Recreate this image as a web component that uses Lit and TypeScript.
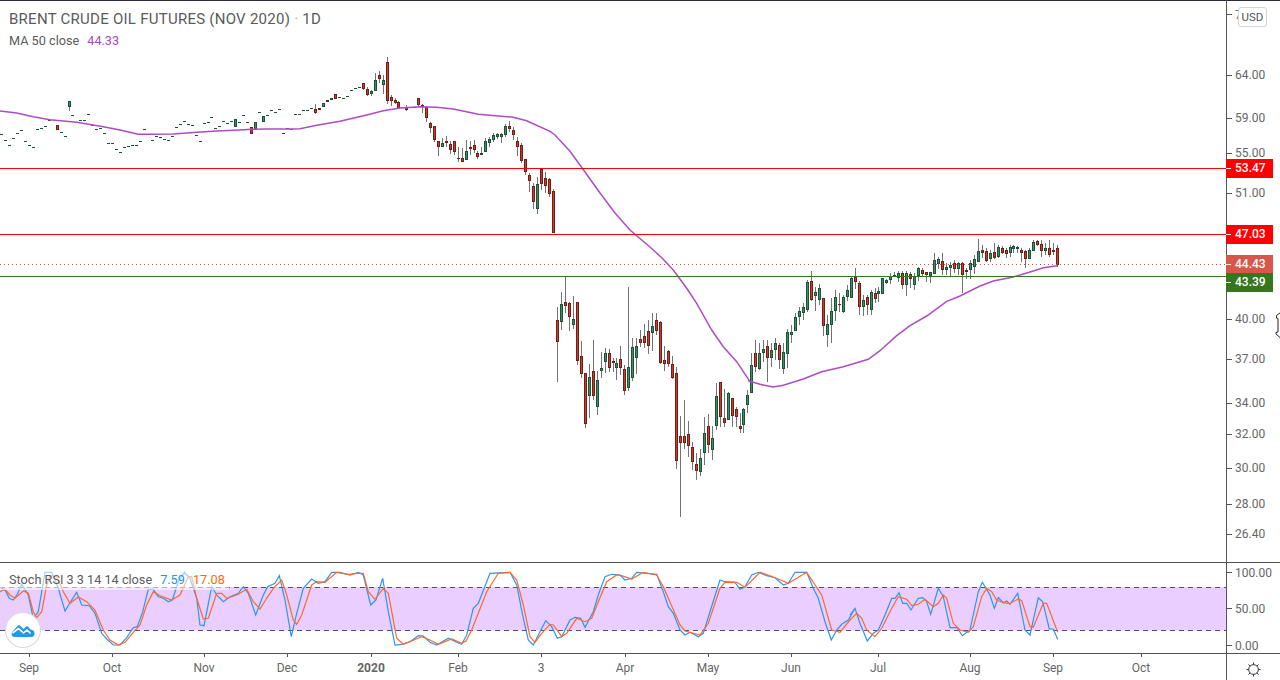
import { LitElement, html, css, svg } from "lit";
import { customElement } from "lit/decorators.js";

type Row = [number, number, number, number, number, string];
const fromZoom = (ox: number, oy: number, rows: Row[]) =>
  rows.map(([x, wt, wb, bt, bb, c]) => ({
    x: ox + x / 3, wt: oy + wt / 3, wb: oy + wb / 3, bt: oy + bt / 3, bb: oy + bb / 3, c,
  }));

const z1: Row[] = [
  [172,376,389,376,389,"R"],[208,303,332,303,320,"G"],[706,358,382,358,382,"G"],[754,382,401,382,401,"R"],[766,367,386,367,386,"G"],
  [790,349,365,349,365,"G"],[946,312,342,328,339,"R"],[958,324,329,324,329,"R"],[970,310,322,310,322,"G"],[982,301,305,301,305,"R"],
  [994,295,301,295,301,"G"],[1006,283,296,283,296,"R"],[1088,250,270,250,266,"R"],[1100,262,288,267,284,"R"],[1112,270,287,274,282,"G"],
  [1124,218,272,241,272,"G"],[1136,214,250,226,236,"R"],[1148,225,283,241,254,"G"],[1160,172,312,187,302,"R"],[1172,285,318,292,302,"R"],
  [1184,295,312,301,308,"R"],[1195,303,328,307,323,"R"],[1219,315,332,320,329,"R"],[1255,295,318,295,314,"R"],[1267,312,340,316,320,"R"],
];
const dashes: [number, number][] = [
  [4,403],[16,421],[28,436],[40,415],[52,400],[64,391],[76,424],[88,436],[100,442],[112,388],[124,385],[136,379],[148,360],[184,397],[196,409],
  [217,345],[229,367],[241,361],[253,361],[265,343],[277,374],[289,386],[301,385],[313,400],[325,430],[337,430],[349,448],[361,457],[373,441],
  [385,438],[397,436],[409,436],[421,423],[433,387],[445,403],[457,421],[469,409],[481,412],[493,418],[505,421],[517,409],[529,382],[541,373],
  [553,364],[565,373],[577,376],[589,406],[601,424],[613,370],[623,367],[634,352],[646,385],[658,379],[670,364],[682,370],[694,364],[718,366],
  [730,346],[742,367],[778,337],[802,344],[814,331],[826,337],[838,328],[850,400],[862,385],[874,386],[886,343],[898,343],[910,331],[922,329],
  [934,323],[1018,292],[1028,295],[1040,289],[1052,271],[1064,265],[1076,262],[1207,320],[1231,320],[1243,320],
];
const z8: Row[] = [
  [19,48,95,52,83,"R"],[31,97,128,100,113,"R"],[43,107,155,109,149,"R"],[55,153,197,153,170,"R"],[67,143,172,160,170,"G"],[79,138,172,153,158,"R"],
  [91,152,192,162,179,"R"],[103,152,195,154,185,"R"],[115,172,215,204,207,"R"],[127,175,217,205,215,"R"],[139,150,210,184,209,"G"],[151,153,195,171,176,"R"],
  [163,150,190,166,179,"R"],[172,183,207,190,200,"R"],[184,172,195,190,194,"G"],[196,145,187,154,185,"G"],[208,140,172,148,158,"G"],[220,130,157,136,149,"G"],
  [232,130,147,133,140,"G"],[244,130,158,133,140,"G"],[256,102,140,108,134,"G"],[268,93,125,109,116,"R"],[280,110,150,121,134,"R"],[292,140,197,154,170,"R"],
  [304,160,220,166,212,"R"],[316,207,255,208,245,"R"],[328,248,305,256,272,"R"],[340,280,357,289,335,"R"],[352,262,372,283,356,"G"],[364,235,300,237,281,"R"],
  [376,247,310,265,287,"R"],[388,265,320,268,311,"R"],[400,298,430,304,428,"R"],
];
const z6: Row[] = [
  [82,110,335,150,215,"R"],[94,66,180,102,155,"G"],[106,20,128,96,107,"R"],[118,96,182,99,140,"R"],[130,78,177,148,164,"G"],[142,96,285,96,272,"R"],
  [154,213,323,258,311,"R"],[166,310,473,310,461,"R"],[178,282,444,321,377,"G"],[190,210,390,303,377,"R"],[202,303,435,330,410,"G"],[214,247,323,294,302,"G"],
  [226,235,308,249,275,"G"],[238,237,305,249,293,"R"],[248,265,305,274,278,"R"],[259,265,330,279,293,"G"],[271,228,316,267,293,"R"],[283,286,375,297,362,"R"],
  [295,52,362,291,354,"G"],[307,205,332,231,323,"G"],[319,205,312,228,263,"G"],[331,180,230,207,219,"R"],[343,163,235,198,219,"R"],[355,150,252,183,227,"R"],
  [367,130,243,168,188,"G"],[379,130,195,150,182,"R"],[391,153,282,156,278,"R"],[403,228,303,270,281,"R"],[415,240,290,243,281,"R"],[427,258,328,282,323,"R"],
  [439,290,597,309,572,"R"],[451,438,740,498,519,"R"],[463,390,538,498,519,"R"],[475,453,560,492,527,"R"],[487,517,600,531,575,"R"],[499,548,630,582,602,"R"],
  [511,537,618,564,605,"G"],[523,442,585,489,548,"G"],[535,432,550,468,524,"R"],[547,468,570,504,540,"G"],[559,340,480,378,467,"G"],[571,336,470,336,440,"R"],
  [583,357,472,444,459,"R"],[595,365,450,369,449,"G"],[607,385,470,384,437,"R"],[619,410,472,417,440,"R"],[631,428,490,468,476,"R"],[640,415,490,417,464,"G"],
  [652,360,428,375,404,"G"],[664,250,370,285,368,"G"],
];
const z7: Row[] = [
  [46,330,425,369,410,"R"],[58,340,420,369,418,"G"],[70,330,395,357,369,"G"],
  [82,330,455,348,383,"R"],[94,340,410,360,383,"G"],[106,324,390,339,359,"G"],[118,340,417,345,389,"R"],[130,340,432,366,416,"G"],[142,296,414,306,371,"G"],
  [154,285,340,306,315,"G"],[166,250,302,261,302,"G"],[178,230,285,243,260,"G"],[190,220,270,231,250,"G"],[202,150,245,156,239,"G"],[214,122,214,153,209,"R"],
  [226,172,242,186,197,"G"],[238,162,224,174,209,"G"],[250,204,318,204,287,"R"],[262,255,350,282,314,"G"],[274,205,338,243,284,"G"],[286,180,272,202,242,"G"],
  [298,188,245,222,225,"R"],[310,196,248,201,245,"G"],[322,165,213,180,200,"G"],[334,140,205,144,203,"G"],[346,113,178,140,155,"R"],[358,152,255,159,230,"R"],
  [370,195,258,210,231,"G"],[382,195,254,201,224,"R"],[394,180,256,187,239,"G"],[406,175,220,190,207,"R"],[415,170,215,182,192,"G"],[427,144,192,144,191,"G"],
  [439,148,162,151,158,"G"],[451,128,162,139,149,"G"],[463,125,140,135,138,"G"],[475,123,155,129,143,"G"],[487,123,178,129,164,"R"],[499,123,197,129,165,"G"],
  [511,125,175,133,147,"R"],[523,130,180,139,165,"G"],[535,110,153,114,138,"G"],[547,115,137,121,132,"R"],[559,125,157,127,134,"R"],[571,125,158,127,138,"G"],
  [583,70,132,91,132,"G"],[595,82,118,87,101,"G"],[607,70,135,94,120,"R"],[619,100,135,111,120,"G"],[631,95,138,105,113,"G"],[643,90,130,100,116,"R"],
  [655,95,135,100,117,"G"],[667,95,190,100,134,"R"],[679,115,147,120,125,"R"],[691,90,147,100,120,"G"],[703,75,132,88,110,"G"],[715,27,97,64,95,"G"],
  [727,45,85,61,68,"R"],[739,55,95,64,93,"R"],[751,60,95,69,87,"G"],[763,40,87,67,83,"R"],[775,45,85,51,80,"G"],[787,47,72,55,68,"R"],[799,55,85,60,71,"R"],
  [811,45,80,52,68,"G"],[820,45,70,48,56,"G"],[832,48,70,52,56,"G"],[844,55,97,61,68,"R"],[856,60,114,64,86,"R"],[868,55,88,61,86,"G"],[880,30,62,36,62,"G"],
  [892,30,48,34,44,"R"],[904,30,82,42,62,"R"],[916,40,75,55,62,"G"],[928,30,80,55,74,"R"],[940,38,75,61,65,"R"],[952,45,110,55,104,"R"],
];
const candles = [
  ...fromZoom(0, 0, z1),
  ...fromZoom(420, 90, z8),
  ...fromZoom(530, 270, z6),
  ...fromZoom(740, 230, z7),
];

const ma: [number, number][] = ([
  [0,333],[50,339],[100,350],[150,359],[230,367],[310,380],[360,390],[415,403],[450,403],[520,402],[590,397],[650,393],[720,390],[754,388],[800,387],[870,387],[900,386],[950,376],[1020,364],[1100,345],[1150,332],[1200,324],[1260,320],
] as [number, number][]).map(([x, y]) => [x / 3, y / 3] as [number, number]).concat(
  ([[50,52],[100,57],[175,73],[280,82],[320,92],[390,124],[405,135],[450,184]] as [number, number][]).map(([x, y]) => [420 + x / 3, 90 + y / 3] as [number, number]),
  [[585,172],[600,193],[615,213],[630,230],[650,247],[662,258]],
  ([[430,0],[470,55],[500,100],[545,180],[580,230],[620,275],[660,335]] as [number, number][]).map(([x, y]) => [530 + x / 3, 270 + y / 3] as [number, number]),
  ([[25,452],[60,463],[100,471],[130,466],[190,447],[245,425],[310,410],[385,388],[420,362],[470,317],[510,287],[560,258],[620,214],[660,198],[720,168],[760,153],[820,141],[880,123],[910,113],[952,107]] as [number, number][]).map(([x, y]) => [740 + x / 3, 230 + y / 3] as [number, number]),
);

const zp = (ox: number, pts: number[][]) => pts.map(([x, y]) => [ox + x / 3, 555 + y / 3]);
const blue = [
  ...zp(0, [[0,97],[15,105],[28,130],[40,135],[52,118],[65,88],[85,120],[100,190],[115,170],[135,52],[155,52],[175,100],[195,168],[215,135],[230,112],[245,150],[268,152],[285,175],[305,235],[320,252],[340,270],[360,270],[380,248],[400,218],[412,215],[428,170],[445,103],[460,103],[475,125],[490,130],[505,140],[517,135],[535,80],[553,52],[570,70],[590,130],[600,210],[612,212],[635,95],[650,120],[670,140],[690,125],[715,115],[730,95],[745,115],[767,180],[790,120],[803,95],[825,85],[838,62],[855,135],[874,245],[890,175],[910,100],[935,72],[955,85],[975,80],[995,52],[1020,52],[1050,60],[1075,52],[1090,60],[1112,150],[1128,135],[1148,70],[1165,170],[1185,270],[1205,268],[1230,260],[1255,242],[1270,243]]),
  ...zp(430, [[0,262],[20,270],[55,250],[80,262],[95,268],[110,240],[130,160],[145,145],[180,55],[240,52],[260,90],[280,190],[295,255],[310,270],[330,230],[347,197],[365,215],[382,250],[395,245],[420,195],[435,187],[452,190],[465,217],[490,170],[505,120],[525,65],[545,58],[570,60],[585,75],[605,70],[620,52],[680,58],[700,110],[715,155],[730,175],[750,225],[765,240],[780,232],[805,245],[820,235],[840,170],[870,75],[885,80],[915,82],[930,103],[945,95],[965,60],[985,52],[1010,62],[1035,68],[1060,90],[1075,85],[1095,52],[1130,52],[1150,100],[1165,130],[1185,200],[1204,255],[1220,225],[1235,208],[1255,195],[1275,160]]),
  ...zp(850, [[0,180],[15,160],[30,205],[52,258],[70,235],[85,225],[105,180],[125,130],[135,130],[147,113],[158,145],[170,145],[183,165],[205,130],[218,128],[230,140],[242,178],[265,100],[280,125],[300,218],[322,218],[337,242],[360,225],[385,110],[397,82],[420,120],[433,160],[445,128],[460,143],[470,138],[480,148],[503,115],[525,225],[540,240],[565,128],[578,140],[598,222],[610,222],[623,253]]),
];
const orange = [
  ...zp(0, [[0,110],[15,103],[30,120],[45,130],[70,108],[85,115],[100,170],[110,188],[125,170],[140,90],[150,62],[170,65],[190,110],[210,145],[235,126],[260,140],[285,165],[310,225],[330,255],[355,270],[375,262],[400,232],[420,210],[440,150],[460,110],[480,122],[515,135],[540,120],[565,65],[575,65],[590,130],[610,192],[625,190],[650,115],[665,115],[680,130],[710,120],[740,103],[760,140],[780,162],[800,130],[820,100],[845,75],[860,120],[880,195],[890,208],[905,180],[935,90],[950,80],[975,82],[1010,52],[1045,58],[1075,55],[1090,55],[1105,110],[1125,133],[1150,100],[1165,115],[1190,250],[1210,268],[1235,258],[1265,245]]),
  ...zp(430, [[0,255],[25,268],[65,252],[95,265],[108,258],[125,225],[170,110],[205,55],[240,52],[260,75],[280,150],[300,245],[315,262],[335,235],[360,208],[370,210],[395,245],[410,235],[440,190],[465,200],[485,190],[505,140],[530,80],[560,60],[575,62],[605,72],[640,52],[680,60],[700,95],[750,210],[765,228],[810,240],[835,205],[870,100],[885,82],[920,82],[945,97],[990,52],[1020,62],[1045,72],[1075,85],[1130,52],[1175,120],[1205,225],[1230,232],[1260,195],[1280,175]]),
  ...zp(850, [[0,195],[20,175],[35,190],[50,225],[75,245],[95,220],[125,160],[145,125],[170,133],[185,152],[205,148],[225,133],[250,155],[265,145],[280,120],[290,130],[310,205],[330,225],[355,232],[370,215],[395,125],[410,100],[425,110],[440,135],[460,143],[478,146],[505,132],[515,137],[540,215],[550,217],[580,145],[590,145],[623,232]]),
];
const pts = (a: number[][]) => a.map(([x, y]) => `${x.toFixed(1)},${y.toFixed(1)}`).join(" ");

const prices: [string, number][] = [["64.00",74.5],["59.00",117.5],["55.00",153],["51.00",192.5],["40.00",318.5],["37.00",359],["34.00",403],["32.00",434],["30.00",468],["28.00",504],["26.40",534]];
const tags: [string, number, number, string][] = [["53.47",158,19,"#ff0000"],["47.03",224,19,"#ff0000"],["44.43",254,18,"#d9574a"],["43.39",272,19,"#38761d"]];
const stochTicks: [string, number][] = [["100.00",572],["50.00",608],["0.00",645]];
const months: [string, number, boolean][] = [["Sep",29,false],["Oct",112,false],["Nov",204,false],["Dec",287,false],["2020",371,true],["Feb",458,false],["3",541,false],["Apr",625,false],["May",708,false],["Jun",791,false],["Jul",878,false],["Aug",970,false],["Sep",1053,false],["Oct",1141,false]];

@customElement("app-root")
export class AppRoot extends LitElement {
  static styles = css`
    :host { display: block; width: 1280px; height: 680px; overflow: hidden; background: #fff; font-family: Roboto, "Liberation Sans", sans-serif; }
    .layout { display: grid; grid-template-columns: 1226px 54px; grid-template-rows: 563px 91px 26px; height: 680px; box-sizing: border-box; position: relative; }
    .layout > * { position: relative; min-width: 0; }
    .top { border-top: 1px solid #2a2e39; box-sizing: border-box; }
    .rule { border-bottom: 1px solid #555; box-sizing: border-box; }
    .axis { border-left: 1px solid #555; }
    .plot { display: block; position: absolute; left: 0; top: 0; }
    .legend { position: absolute; left: 9px; color: #5b5b5b; display: flex; gap: 8px; white-space: nowrap; }
    .title { top: 9px; font-size: 15px; line-height: 18px; letter-spacing: .26px; }
    .title b { font-weight: 400; color: #a6a6a6; }
    .ma { top: 32px; font-size: 12.7px; line-height: 16px; }
    .purple { color: #ab47bc; }
    .stoch { top: 7px; left: 0; padding: 2px 4px 2px 9px; font-size: 12.7px; line-height: 16px; background: rgba(255, 255, 255, .55); }
    .cblue { color: #2196f3; }
    .corange { color: #ff6d00; }
    .tick { position: absolute; left: 0; width: 5px; height: 1px; background: #555; }
    .plabel { position: absolute; left: 8px; font-size: 12px; line-height: 14px; color: #666; white-space: nowrap; }
    .usd { position: absolute; left: 11px; top: 6px; width: 29px; height: 20px; box-sizing: border-box; border: 1px solid #d1d4dc; border-radius: 3px; background: #fff; color: #555; font-size: 11.5px; line-height: 18px; text-align: center; }
    .tag { position: absolute; left: -1px; width: 47px; color: #fff; font-size: 12px; font-weight: 500; padding-left: 9px; box-sizing: border-box; }
    .tag i { position: absolute; left: 0; top: 9px; width: 5px; height: 1px; background: #fff; }
    .cursor { position: absolute; left: 48px; top: 311px; }
    .logo { position: absolute; left: 6px; top: 50px; width: 34px; height: 34px; border-radius: 50%; background: #fff; box-shadow: 0 0 0 1px #ddd6e3; display: flex; align-items: center; justify-content: center; }
    .mtick { position: absolute; top: 0; width: 1px; height: 3px; background: #555; }
    .month { position: absolute; top: 7px; transform: translateX(-50%); color: #666; font-size: 12px; line-height: 14px; }
    .month.bold { font-weight: 700; }
    .gear { display: flex; align-items: center; justify-content: center; padding-top: 4px; box-sizing: border-box; }
  `;

  private candleSvg() {
    const col = { R: ["#6e2018", "#cc3b2c"], G: ["#1d5239", "#3d8f63"] } as Record<string, string[]>;
    return candles.map((k) => {
      const px = Math.round(k.x);
      const t = Math.round(k.bt), b = Math.max(Math.round(k.bb), t + 1);
      const [edge, fill] = col[k.c];
      return svg`
        <rect x=${px} y=${Math.round(k.wt)} width="1" height=${Math.max(1, Math.round(k.wb) - Math.round(k.wt))} fill="#737373"/>
        <rect x=${px - 1} y=${t} width="3" height=${b - t} fill=${edge}/>
        ${b - t > 2 ? svg`<rect x=${px} y=${t + 1} width="1" height=${b - t - 2} fill=${fill}/>` : null}`;
    });
  }

  render() {
    return html`<div class="layout">
      <div class="top rule">
        <svg class="plot" width="1226" height="561" viewBox="0 1 1226 561" shape-rendering="crispEdges">
          ${dashes.map(([x, y]) => svg`<rect x=${Math.round(x / 3) - 1} y=${Math.round(y / 3)} width="3" height="1" fill="#1d5239"/>`)}
          ${this.candleSvg()}
          <polyline points=${pts(ma)} fill="none" stroke="#ae4cc4" stroke-width="1.5" shape-rendering="geometricPrecision"/>
          <rect x="0" y="168" width="1226" height="1" fill="#ff0000"/>
          <rect x="0" y="234" width="1226" height="1" fill="#ff0000"/>
          <line x1="0" y1="264.5" x2="1226" y2="264.5" stroke="#e8483a" stroke-dasharray="1 3"/>
          <rect x="0" y="276" width="1226" height="1" fill="#38761d"/>
        </svg>
        <div class="legend title"><span>BRENT CRUDE OIL FUTURES (NOV 2020) <b>·</b> 1D</span></div>
        <div class="legend ma"><span>MA 50 close</span><span class="purple">44.33</span></div>
      </div>
      <div class="top axis rule">
        ${prices.map(([t, y]) => html`<div class="tick" style="top:${Math.round(y) - 1}px"></div><div class="plabel" style="top:${y - 8}px">${t}</div>`)}
        <div class="tick" style="top:13px"></div><div class="plabel" style="top:7px">7</div>
        <div class="usd">USD</div>
        ${tags.map(([t, top, h, c]) => html`<div class="tag" style="top:${top}px;height:${h}px;line-height:${h}px;background:${c}"><i></i>${t}</div>`)}
        <svg class="cursor" width="6" height="26" viewBox="0 0 6 26"><path d="M5.5 .5 1.500 3.500V6L3 6.500 3 20 1 20.500V22L5 25.500" fill="#fff" stroke="#222" stroke-width="1"/></svg>
      </div>
      <div class="rule">
        <svg class="plot" width="1226" height="90" viewBox="0 563 1226 90">
          <rect x="0" y="587" width="1226" height="43.5" fill="#e9ceff"/>
          <line x1="0" x2="1226" y1="587.5" y2="587.5" stroke="#5d4a6e" stroke-dasharray="5 4"/>
          <line x1="0" x2="1226" y1="630.5" y2="630.5" stroke="#5d4a6e" stroke-dasharray="5 4"/>
          <polyline points=${pts(blue)} fill="none" stroke="#2f95ee" stroke-width="1.2"/>
          <polyline points=${pts(orange)} fill="none" stroke="#fb6a2c" stroke-width="1.2"/>
        </svg>
        <div class="legend stoch"><span>Stoch RSI 3 3 14 14 close</span><span class="cblue">7.59</span><span class="corange">17.08</span></div>
        <div class="logo">
          <svg width="24" height="15" viewBox="0 0 24 15"><path d="M1 9 7 2.500Q8 1.500 9 2.500L12.500 6 15 3.500Q16 2.800 17 3.500L19.500 6.500Q23.500 7 23.500 10.500 23.500 14 20 14H3Q-.5 13.500 1 9Z" fill="#2398ea"/><path d="M1.500 10 7.500 5.500 12.500 10 16 7 19.500 10.500" fill="none" stroke="#fff" stroke-width="1.600"/></svg>
        </div>
      </div>
      <div class="axis rule">
        ${stochTicks.map(([t, y]) => html`<div class="tick" style="top:${y - 563}px"></div><div class="plabel" style="top:${y - 569}px">${t}</div>`)}
      </div>
      <div>
        ${months.map(([t, x, b]) => html`<div class="mtick" style="left:${x}px"></div><div class="month ${b ? "bold" : ""}" style="left:${x}px">${t}</div>`)}
      </div>
      <div class="axis gear">
        <svg width="15" height="15" viewBox="0 0 17 17" fill="none" stroke="#2a2e39" stroke-width="1.100"><circle cx="8.500" cy="8.500" r="5.500"/><path d="M8.500 .5V3M8.500 14V16.500M.5 8.500H3M14 8.500H16.500M2.800 2.800 4.600 4.600M12.400 12.400 14.200 14.200M2.800 14.200 4.600 12.400M12.400 4.600 14.200 2.800"/></svg>
      </div>
    </div>`;
  }
}
